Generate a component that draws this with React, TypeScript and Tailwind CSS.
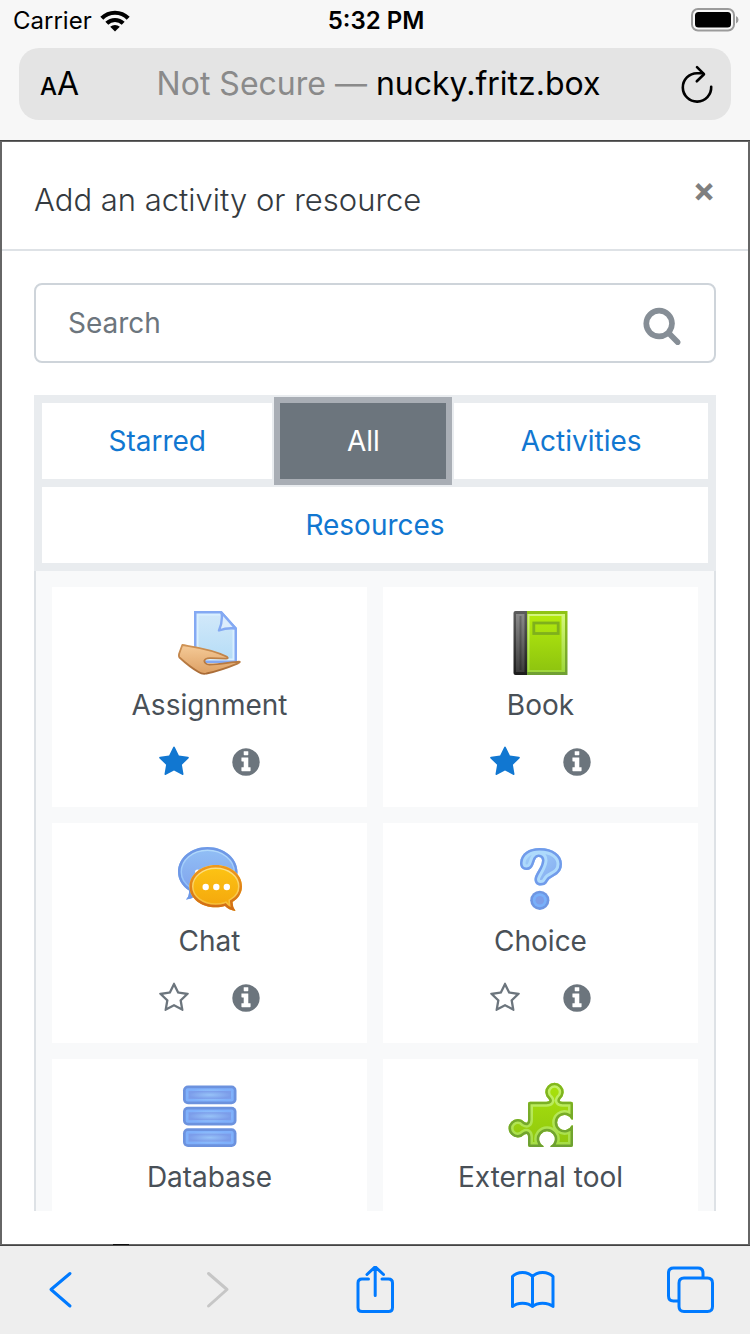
import React, { useState } from 'react';
import clsx from 'clsx';

type IconProps = { className?: string };

const starPath =
  'M1728 647q0 22-26 48l-363 354 86 500q1 7 1 20 0 21-10.5 35.5t-30.5 14.5q-19 0-40-12l-449-236-449 236q-22 12-40 12-21 0-31.5-14.5t-10.5-35.5q0-6 2-20l86-500-364-354q-25-27-25-48 0-37 56-46l502-73 225-455q19-41 49-41t49 41l225 455 502 73q56 9 56 46z';
const starOutlinePath =
  'M1201 1004l306-297-422-62-189-382-189 382-422 62 306 297-73 421 378-199 377 199zm527-357q0 22-26 48l-363 354 86 500q1 7 1 20 0 50-41 50-19 0-40-12l-449-236-449 236q-22 12-40 12-21 0-31.5-14.5t-10.5-35.5q0-6 2-20l86-500-364-354q-25-27-25-48 0-37 56-46l502-73 225-455q19-41 49-41t49 41l225 455 502 73q56 9 56 46z';
const infoPath =
  'M1152 1376v-160q0-14-9-23t-23-9h-96v-512q0-14-9-23t-23-9h-320q-14 0-23 9t-9 23v160q0 14 9 23t23 9h96v320h-96q-14 0-23 9t-9 23v160q0 14 9 23t23 9h448q14 0 23-9t9-23zm-128-896v-160q0-14-9-23t-23-9h-192q-14 0-23 9t-9 23v160q0 14 9 23t23 9h192q14 0 23-9t9-23zm640 416q0 209-103 385.5t-279.5 279.5-385.5 103-385.5-103-279.5-279.5-103-385.5 103-385.5 279.5-279.5 385.5-103 385.5 103 279.5 279.5 103 385.5z';
const searchPath =
  'M1216 832q0-185-131.5-316.5t-316.5-131.5-316.5 131.5-131.5 316.5 131.5 316.5 316.5 131.5 316.5-131.5 131.5-316.5zm512 832q0 52-38 90t-90 38q-54 0-90-38l-343-342q-179 124-399 124-143 0-273.5-55.5t-225-150-150-225-55.5-273.5 55.5-273.5 150-225 225-150 273.5-55.5 273.5 55.5 225 150 150 225 55.5 273.5q0 220-124 399l343 343q37 37 37 90z';

const Glyph: React.FC<IconProps & { d: string }> = ({ d, className }) => (
  <svg viewBox="0 0 1792 1792" fill="currentColor" className={className} aria-hidden="true">
    <path d={d} />
  </svg>
);

// Vertical two-stop gradient
const Fade: React.FC<{ id: string; from: string; to: string }> = ({ id, from, to }) => (
  <linearGradient id={id} x1="0" y1="0" x2="0" y2="1">
    <stop offset="0" stopColor={from} />
    <stop offset="1" stopColor={to} />
  </linearGradient>
);

type BevelProps = { id: string; d: string; fill: string; light: string; dark: string; rim?: number };

// Shape with a dark outline and a lighter inner rim, both kept inside its edge
const Bevel: React.FC<BevelProps> = ({ id, d, fill, light, dark, rim = 10 }) => (
  <g>
    <clipPath id={id}>
      <path d={d} />
    </clipPath>
    <g clipPath={`url(#${id})`}>
      <path d={d} fill={fill} />
      <path d={d} fill="none" stroke={light} strokeWidth={rim} />
      <path d={d} fill="none" stroke={dark} strokeWidth={5} />
    </g>
  </g>
);

const AssignmentIcon = () => (
  <svg viewBox="0 0 64 64" className="h-16 w-16" aria-hidden="true">
    <defs>
      <Fade id="page" from="#d3e9fa" to="#b4dcf6" />
      <Fade id="skin" from="#f5cb98" to="#dda064" />
      <Fade id="skinEdge" from="#cf9355" to="#a86a35" />
    </defs>
    <Bevel id="pageClip" d="M16 0H43.5L59 17V52H16Z" fill="url(#page)" light="#d9f0ff" dark="#84a9f3" rim={9} />
    <path d="M43.5 1.5Q45 10 41 19.5Q49 16.5 57.5 17.5Z" fill="#dcecfc" stroke="#84a9f3" strokeWidth="2.4" strokeLinejoin="round" />
    <path
      d="M4.3 34C16 36 34 38 49 45.8Q51 47.6 48 47.6L32.500 47.2Q27 47 26.300 50Q26.700 53.2 31.500 53.5C42 53.500 52 51.200 61 50.600Q63 50.800 60 52.300C50 56.500 40 60 28.500 62.500Q24.500 63.500 20.500 61C13.500 57 7.500 52 1.500 46.500Q.5 45.500 1.200 42.500Z"
      fill="url(#skin)"
      stroke="url(#skinEdge)"
      strokeWidth="1.8"
      strokeLinejoin="round"
    />
  </svg>
);

const BookIcon = () => (
  <svg viewBox="0 0 64 64" className="h-16 w-16" aria-hidden="true">
    <defs>
      <Fade id="cover" from="#b3ea0d" to="#8fc50f" />
      <Fade id="coverEdge" from="#90c414" to="#6f9f34" />
      <Fade id="coverRim" from="#d5f77d" to="#9fd83c" />
      <Fade id="spine" from="#8a8a8a" to="#3c3c3c" />
      <Fade id="spineEdge" from="#5c5c5c" to="#1c1c1c" />
    </defs>
    <path d="M19 0H59.5V64H19Z" fill="url(#coverEdge)" />
    <path d="M19.5 3H57V61H19.500Z" fill="url(#coverRim)" />
    <path d="M21.5 5H53.500V59H21.500Z" fill="url(#cover)" />
    <path d="M7.5 0H19V64H7.500Q5.500 64 5.500 62V2Q5.500 0 7.500 0Z" fill="url(#spineEdge)" />
    <path d="M8 3H16.5V61H8Z" fill="url(#spine)" />
    <path d="M11.5 5H13.5V59H11.5Z" fill="#000" opacity=".22" />
    <rect x="25.8" y="12" width="24.4" height="10.5" fill="none" stroke="#7fb01c" strokeWidth="2.8" />
  </svg>
);

const ChatIcon = () => (
  <svg viewBox="0 0 64 64" className="h-16 w-16 overflow-visible" aria-hidden="true">
    <defs>
      <Fade id="blueBubble" from="#92c0f6" to="#7d9eea" />
      <Fade id="blueRim" from="#b5dcfb" to="#82b4f8" />
      <Fade id="orangeBubble" from="#fdc514" to="#f3a40c" />
      <Fade id="orangeRim" from="#fde48b" to="#f5b92a" />
      <Fade id="orangeEdge" from="#f09a1c" to="#cf6a15" />
    </defs>
    <Bevel
      id="blueClip"
      d="M29.5 0C46 0 59.5 11 59.5 25S46 50 29.5 50C25 50 21 49 18 48Q14 52 8 52.5Q11.5 49 11 43.5C4 39 0 32 0 25C0 11 13 0 29.5 0Z"
      fill="url(#blueBubble)"
      light="url(#blueRim)"
      dark="#6f98e6"
      rim={8}
    />
    <circle cx="19.500" cy="25" r="2.5" fill="#fff" />
    <Bevel
      id="orangeClip"
      d="M37.8 18C52 18 64 27 64 39.5C64 45.5 60.500 51.5 54.500 55Q54.500 60 57.500 64Q50.500 63 47 59C44.500 60 41 60.300 37.800 60.300C23.500 60.300 11.500 51.500 11.500 39.500S23.500 18 37.800 18Z"
      fill="url(#orangeBubble)"
      light="url(#orangeRim)"
      dark="url(#orangeEdge)"
      rim={8}
    />
    <g fill="#fff">
      <circle cx="27.7" cy="40" r="3.2" />
      <circle cx="38.3" cy="40" r="3.2" />
      <circle cx="48.8" cy="40" r="3.2" />
    </g>
  </svg>
);

const ChoiceIcon = () => (
  <svg viewBox="0 0 64 64" className="h-16 w-16" aria-hidden="true">
    <defs>
      <linearGradient id="markFill" x1="0" y1="0" x2="1" y2="1">
        <stop offset="0" stopColor="#a6d4fa" />
        <stop offset="1" stopColor="#7fa6ef" />
      </linearGradient>
    </defs>
    <Bevel
      id="markClip"
      d="M17.5 23C12.5 23 11 19 11 16C11.5 6 20.5 1 30.5 1C44.5 1 53 8 53 17C53 27 44.500 29 40.500 32C37.500 35 38 38.500 31.500 38.500C27.500 38.500 25.500 36 25.500 32C26 26 32.500 21 33 13.500C33 9.500 28.500 9 27 11.500C24.500 15 25 23 17.500 23Z"
      fill="url(#markFill)"
      light="#aedafc"
      dark="#719bea"
      rim={11}
    />
    <circle cx="30.8" cy="53.3" r="9.6" fill="#6e96e2" />
    <circle cx="30.8" cy="53.3" r="7" fill="#79b0fa" />
    <circle cx="30.8" cy="53.3" r="4.3" fill="#7d9ee8" />
  </svg>
);

const DatabaseIcon = () => (
  <svg viewBox="0 0 64 64" className="h-16 w-16" aria-hidden="true">
    <defs>
      <radialGradient id="diskFill">
        <stop offset="0" stopColor="#97c3f8" />
        <stop offset="1" stopColor="#7c9dea" />
      </radialGradient>
      <radialGradient id="diskRim">
        <stop offset="0" stopColor="#a9d6fc" />
        <stop offset="1" stopColor="#7fb0fb" />
      </radialGradient>
    </defs>
    {[2.5, 23.8, 45.2].map((y) => (
      <g key={y}>
        <rect x="6" y={y} width="53.5" height="18.7" rx="5" fill="#6c92de" />
        <rect x="8.7" y={y + 2.7} width="48" height="13.3" rx="2" fill="url(#diskRim)" />
        <rect x="11.5" y={y + 5.4} width="42.5" height="8" fill="url(#diskFill)" />
      </g>
    ))}
  </svg>
);

const PuzzleIcon = () => (
  <svg viewBox="0 0 64 64" className="h-16 w-16 overflow-visible" aria-hidden="true">
    <defs>
      <Fade id="puzzleFill" from="#a9e30c" to="#8fc60f" />
      <Fade id="puzzleRim" from="#c6f26a" to="#a4dc45" />
      <Fade id="puzzleEdge" from="#82b81c" to="#6d9f33" />
    </defs>
    <Bevel
      id="puzzleClip"
      d="M21 18.7H37.5Q42 18.7 39.5 16A9.2 9.2 0 1 1 51.5 16Q49.5 18.7 53.5 18.7H62Q64 18.7 64 21V36.5H62.5A7.5 7.5 0 1 0 62.5 42.5H64V62Q64 64 62 64H41.5V63A7.8 7.8 0 1 0 34.5 63V64H21Q19 64 19 62V54Q19 49.5 15.5 51.5A9.2 9.2 0 1 1 15.5 39Q19 41 19 37V20.7Q19 18.7 21 18.7Z"
      fill="url(#puzzleFill)"
      light="url(#puzzleRim)"
      dark="url(#puzzleEdge)"
      rim={10}
    />
  </svg>
);

const WifiIcon = () => (
  <svg viewBox="0 0 30 22" className="h-[22px] w-[30px]" aria-hidden="true">
    <path d="M1.8 8.3A18.5 18.5 0 0 1 28.2 8.3M6.8 13.3A11.8 11.8 0 0 1 23.2 13.3" fill="none" stroke="#000" strokeWidth="4.2" />
    <path d="M15 21.5L10.2 16.8A7 7 0 0 1 19.8 16.8Z" />
  </svg>
);

const BatteryIcon = () => (
  <svg viewBox="0 0 48 24" className="h-6 w-12" aria-hidden="true">
    <rect x="1" y="1" width="42" height="21.5" rx="6" fill="none" stroke="#9b9b9b" strokeWidth="2" />
    <rect x="4" y="4" width="36" height="15.5" rx="3.5" />
    <path d="M45 8Q47.5 9 47.5 11.7T45 15.5Z" fill="#9b9b9b" />
  </svg>
);

const ReloadIcon = () => (
  <svg viewBox="0 0 40 40" className="h-10 w-10" fill="none" stroke="#000" strokeWidth="2.6" strokeLinecap="round" strokeLinejoin="round" aria-hidden="true">
    <path d="M34.2 22.8A14.2 14.2 0 1 1 20 9.2H26" />
    <path d="M20 3.2L27 10.2L19.8 17.3" />
  </svg>
);

const modules = [
  { name: 'Assignment', icon: <AssignmentIcon />, starred: true },
  { name: 'Book', icon: <BookIcon />, starred: true },
  { name: 'Chat', icon: <ChatIcon />, starred: false },
  { name: 'Choice', icon: <ChoiceIcon />, starred: false },
  { name: 'Database', icon: <DatabaseIcon />, starred: false },
  { name: 'External tool', icon: <PuzzleIcon />, starred: false },
];

const tabs = ['Starred', 'All', 'Activities', 'Resources'];

const toolbar = [
  { label: 'Back', d: 'M34 7.5L15 23.5L34 40' },
  { label: 'Forward', d: 'M14.5 7.5L33 23.5L14.5 40', disabled: true },
  { label: 'Share', d: 'M17.5 13H11Q7 13 7 17V41.5Q7 45.5 11 45.5H37.5Q41.5 45.5 41.5 41.5V17Q41.5 13 37.5 13H31M24.2 29.5V1.5M16 8.5L24.2 .8L32.500 8.5' },
  { label: 'Bookmarks', d: 'M3.5 40.5V10.5C8 5 19 5 23.5 10.500C28 5 39 5 44 10.500V40.500C39 36 28 36 23.500 40.500C19 36 8 36 3.500 40.500M23.500 10.500V40.500' },
  { label: 'Tabs', d: 'M13 35H7.5Q2.5 35 2.5 30V7Q2.5 2 7.5 2H32Q37 2 37 7V12M18 12H41.5Q46.5 12 46.5 17V40.5Q46.5 45.5 41.5 45.5H18Q13 45.5 13 40.5V17Q13 12 18 12Z' },
];

const BrowserHeader = () => (
  <header className="shrink-0 bg-[#f7f7f7] pb-5 text-black">
    <div className="grid h-12 grid-cols-3 items-start pt-[5px] pr-[11px] pl-[13px] text-2xl">
      <div className="flex items-center gap-2">
        <span>Carrier</span>
        <WifiIcon />
      </div>
      <span className="text-center font-semibold">5:32 PM</span>
      <div className="flex justify-end pt-[3px]">
        <BatteryIcon />
      </div>
    </div>
    <div className="mx-[19px] flex h-[72px] items-center justify-between rounded-[20px] bg-[#e4e4e4] pr-3.5 pl-[21px]">
      <button type="button" aria-label="Page settings" className="flex w-10 items-baseline text-[32px]">
        <span className="text-2xl font-medium">A</span>
        <span>A</span>
      </button>
      <button type="button" className="text-[32px] leading-10 whitespace-nowrap">
        <span className="text-[#8a8a8a]">Not Secure — </span>nucky.fritz.box
      </button>
      <button type="button" aria-label="Reload">
        <ReloadIcon />
      </button>
    </div>
  </header>
);

const App: React.FC = () => {
  const [activeTab, setActiveTab] = useState('All');

  return (
    <div className="flex h-screen flex-col overflow-hidden bg-white font-['Inter','Liberation_Sans',sans-serif]">
      <BrowserHeader />

      {/* Modal */}
      <main className="relative flex min-h-0 flex-1 flex-col border-y border-[#444] bg-[#666] px-0.5 py-px">
        <section className="flex min-h-0 flex-1 flex-col bg-white">
          <div className="flex items-start justify-between border-b-2 border-[#dee2e6] px-8 pt-9 pb-[27px]">
            <h1 className="text-[31px] leading-11 font-light text-[#343a40]">Add an activity or resource</h1>
            <button type="button" aria-label="Close" className="w-6 text-[34px] leading-6 font-bold text-[#7f7f7f]">
              ×
            </button>
          </div>

          <div className="flex min-h-0 flex-1 flex-col px-8 pt-8 pb-[33px]">
            <div className="flex h-20 shrink-0 items-center rounded-lg border-2 border-[#ced4da] px-8">
              <input
                type="text"
                aria-label="Search"
                placeholder="Search"
                className="min-w-0 flex-1 text-[28px] outline-none placeholder:text-[#6c757d]"
              />
              <button type="button" aria-label="Submit search" className="pt-1 text-[#868e96]">
                <Glyph d={searchPath} className="h-10 w-10" />
              </button>
            </div>

            {/* Category tabs */}
            <div className="mt-8 flex shrink-0 flex-wrap gap-2 bg-[#e9ecef] p-2">
              {tabs.map((tab) => (
                <button
                  key={tab}
                  type="button"
                  onClick={() => setActiveTab(tab)}
                  className={clsx(
                    'h-[76px] grow px-10 text-[28px]',
                    tab === activeTab ? 'bg-[#6c757d] text-white ring-6 ring-[#a9aeb5]' : 'bg-white text-[#1177d1]'
                  )}
                >
                  {tab}
                </button>
              ))}
            </div>

            {/* Module grid */}
            <div className="grid min-h-0 flex-1 auto-rows-max grid-cols-2 gap-4 overflow-hidden border-x-2 border-[#dee2e6] bg-[#f8f9fa] p-4">
              {modules.map(({ name, icon, starred }) => (
                <div key={name} className="flex flex-col items-center bg-white pt-6 pb-[25px] text-[#495057]">
                  <a href="#" className="flex flex-col items-center">
                    {icon}
                    <span className="mt-2.5 text-[28px] leading-10">{name}</span>
                  </a>
                  <div className="mt-[17px] flex text-[#6c757d]">
                    <button type="button" aria-label={`Star ${name}`} className="flex h-10 w-[72px] items-center justify-center">
                      {starred ? (
                        <Glyph d={starPath} className="h-8 w-8 text-[#1177d1]" />
                      ) : (
                        <Glyph d={starOutlinePath} className="h-8 w-8" />
                      )}
                    </button>
                    <button type="button" aria-label={`About ${name}`} className="flex h-10 w-[72px] items-center justify-center">
                      <Glyph d={infoPath} className="h-8 w-8" />
                    </button>
                  </div>
                </div>
              ))}
            </div>
          </div>
        </section>
        <span className="absolute bottom-0 left-[113px] h-px w-4 bg-[#111]" />
      </main>

      <nav className="flex h-[88px] shrink-0 items-center justify-between bg-[#eeeeee] px-9">
        {toolbar.map(({ label, d, disabled }) => (
          <button
            key={label}
            type="button"
            aria-label={label}
            disabled={disabled}
            className={disabled ? 'text-[#c6c6c6]' : 'text-[#007aff]'}
          >
            <svg viewBox="0 0 48 48" className="h-12 w-12" fill="none" stroke="currentColor" strokeWidth="3" strokeLinecap="round" strokeLinejoin="round" aria-hidden="true">
              <path d={d} />
            </svg>
          </button>
        ))}
      </nav>
    </div>
  );
};

export default App;
